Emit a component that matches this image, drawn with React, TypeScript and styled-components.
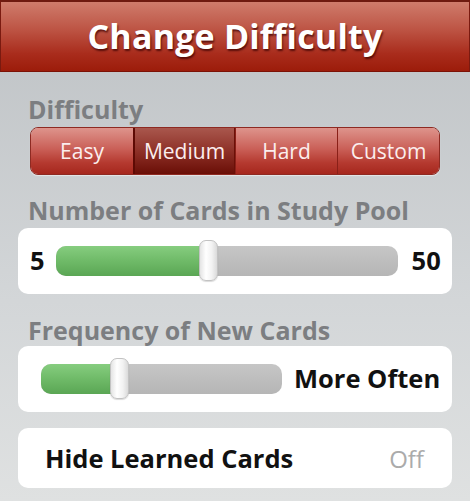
import React from "react";
import styled, { createGlobalStyle } from "styled-components";

const Global = createGlobalStyle`
  html, body { margin: 0; padding: 0; }
  body {
    width: 470px;
    height: 501px;
    overflow: hidden;
    font-family: "Open Sans", "Noto Sans", "DejaVu Sans", sans-serif;
    background: linear-gradient(180deg, #bec2c5 0%, #d3d6d8 60%, #dfe1e1 100%);
  }
`;

const Page = styled.div`
  width: 470px;
  height: 501px;
  display: flex;
  flex-direction: column;
`;

const Header = styled.div`
  height: 72px;
  box-sizing: border-box;
  border-top: 2px solid #6e1a10;
  border-left: 1px solid #7a1a10;
  border-right: 1px solid #7a1a10;
  border-bottom: 1px solid #7c1206;
  background: linear-gradient(180deg, #cf7c6c 0%, #bd5444 40%, #a92c1c 75%, #9c1c0a 100%);
  display: flex;
  align-items: center;
  justify-content: center;
`;

const Title = styled.h1`
  margin: 0;
  color: #ffffff;
  font-size: 34px;
  font-weight: 700;
  letter-spacing: 0.2px;
  text-shadow: 1px 2px 2px rgba(60, 0, 0, 0.75);
  line-height: 1;
  padding-bottom: 2px;
`;

const Content = styled.div`
  display: flex;
  flex-direction: column;
  padding: 0 18px;
`;

const SectionLabel = styled.div<{ $top: number }>`
  margin-top: ${(p) => p.$top}px;
  padding-left: 10px;
  color: #7c7e81;
  font-size: 25px;
  font-weight: 700;
  line-height: 26px;
  height: 26px;
  white-space: nowrap;
`;

const Segmented = styled.div`
  margin: 5px 12px 0 12px;
  height: 48px;
  box-sizing: border-box;
  display: grid;
  grid-template-columns: repeat(4, 1fr);
  border: 1px solid #8e2a22;
  border-radius: 8px;
  overflow: hidden;
  box-shadow: 0 1px 1px rgba(255, 255, 255, 0.5);
`;

const Segment = styled.div<{ $active?: boolean }>`
  display: flex;
  align-items: center;
  justify-content: center;
  color: #fbeeee;
  font-size: 21px;
  font-weight: 400;
  border-left: ${(p) => (p.$active ? "2px solid #5e0a04" : "1px solid #8a2018")};
  border-right: ${(p) => (p.$active ? "1px solid #6a1008" : "none")};
  background: ${(p) =>
    p.$active
      ? "linear-gradient(180deg, #a9574d 0%, #8e3128 50%, #6a0e06 100%)"
      : "linear-gradient(180deg, #de948c 0%, #ca6058 45%, #b53a30 75%, #a6271d 100%)"};
  &:first-child { border-left: none; }
`;

const Card = styled.div<{ $top: number; $height: number }>`
  margin-top: ${(p) => p.$top}px;
  height: ${(p) => p.$height}px;
  background: #ffffff;
  border-radius: 10px;
  display: flex;
  align-items: center;
  box-sizing: border-box;
`;

const EndValue = styled.span<{ $pad: string }>`
  padding: ${(p) => p.$pad};
  font-size: 25.5px;
  font-weight: 700;
  color: #111;
  line-height: 1;
  white-space: nowrap;
`;

const Spacer = styled.span<{ $w: number }>`
  width: ${(p) => p.$w}px;
  flex-shrink: 0;
`;

const Track = styled.div<{ $width: number }>`
  position: relative;
  width: ${(p) => p.$width}px;
  height: 30px;
  border-radius: 10px;
  background: linear-gradient(180deg, #c6c6c6 0%, #bcbcbc 60%, #b6b6b6 100%);
  flex-shrink: 0;
`;

const Fill = styled.div`
  position: absolute;
  left: 0;
  top: 0;
  bottom: 0;
  border-radius: 10px 0 0 10px;
  background: linear-gradient(180deg, #86cd7f 0%, #6fba68 50%, #5aa654 100%);
`;

const Thumb = styled.div`
  position: absolute;
  top: -6px;
  width: 19px;
  height: 41px;
  box-sizing: border-box;
  border-radius: 7px;
  border: 1px solid #c2c2c2;
  background: linear-gradient(90deg, #e4e4e4 0%, #ffffff 35%, #f2f2f2 70%, #dadada 100%);
  box-shadow: 0 1px 1px rgba(0, 0, 0, 0.15);
`;

const Slider: React.FC<{ width: number; value: number }> = ({ width, value }) => {
  const pos = Math.round(width * value);
  return (
    <Track $width={width}>
      <Fill style={{ width: pos + 2 }} />
      <Thumb style={{ left: pos - 6 }} />
    </Track>
  );
};

const ToggleLabel = styled.span`
  padding-left: 27px;
  flex: 1;
  font-size: 25.5px;
  font-weight: 700;
  color: #111;
`;

const ToggleValue = styled.span`
  padding-right: 28px;
  font-size: 24px;
  font-weight: 400;
  color: #ababab;
`;

export default function App() {
  return (
    <Page>
      <Global />
      <Header>
        <Title>Change Difficulty</Title>
      </Header>
      <Content>
        <SectionLabel $top={24}>Difficulty</SectionLabel>
        <Segmented>
          <Segment>Easy</Segment>
          <Segment $active>Medium</Segment>
          <Segment>Hard</Segment>
          <Segment>Custom</Segment>
        </Segmented>
        <SectionLabel $top={22}>Number of Cards in Study Pool</SectionLabel>
        <Card $top={5} $height={66}>
          <EndValue $pad="0 11px 0 12px">5</EndValue>
          <Slider width={342} value={0.435} />
          <EndValue $pad="0 0 0 14px">50</EndValue>
        </Card>
        <SectionLabel $top={23}>Frequency of New Cards</SectionLabel>
        <Card $top={3} $height={66}>
          <Spacer $w={23} />
          <Slider width={241} value={0.31} />
          <EndValue $pad="0 0 0 12px">More Often</EndValue>
        </Card>
        <Card $top={16} $height={60}>
          <ToggleLabel>Hide Learned Cards</ToggleLabel>
          <ToggleValue>Off</ToggleValue>
        </Card>
      </Content>
    </Page>
  );
}
